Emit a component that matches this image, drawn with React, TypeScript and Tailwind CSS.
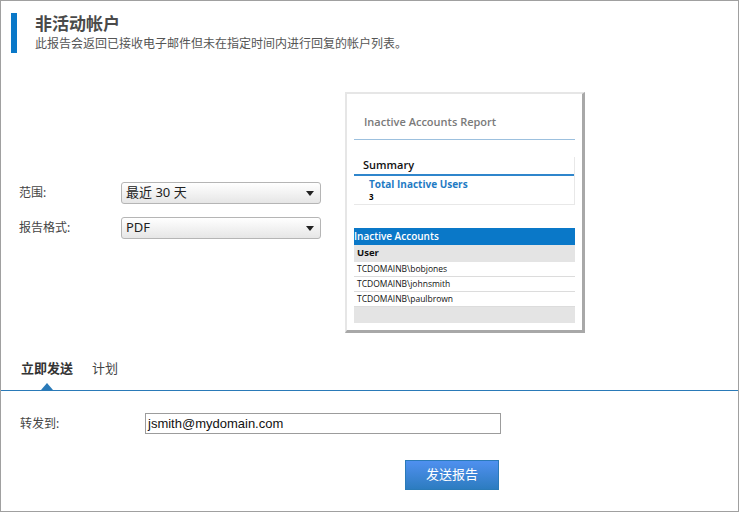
import * as React from "react"

const cjk = { fontFamily: '"Noto Sans", "Noto Sans CJK SC", sans-serif' }
const report = { fontFamily: '"Open Sans", "Noto Sans", sans-serif' }
const latin = { fontFamily: '"Liberation Sans", "Noto Sans CJK SC", sans-serif' }

function Select({ value }: { value: string }) {
  return (
    <div className="flex h-[22px] w-[200px] items-center justify-between rounded-[3px] border border-[#b5b5b5] bg-gradient-to-b from-white to-[#e6e6e6] pl-[4px] pr-[6px] text-[13px] text-[#222]">
      <span>{value}</span>
      <svg width="8" height="5" viewBox="0 0 8 5">
        <path d="M0 0h8L4 5z" fill="#222" />
      </svg>
    </div>
  )
}

function ReportPreview() {
  const users = ["TCDOMAINB\\bobjones", "TCDOMAINB\\johnsmith", "TCDOMAINB\\paulbrown"]
  return (
    <div className="h-[241px] w-[240px] border-l-2 border-t-2 border-[#e6e6e6] border-r-[3px] border-b-[3px] border-r-[#a8a8a8] border-b-[#a8a8a8] bg-white" style={report}>
      <div className="px-[7px] pt-[20px]">
        <div className="pb-[8px] pl-[10px] text-[11px] font-semibold text-[#7a7a7a]">Inactive Accounts Report</div>
        <div className="h-px bg-[#9cc0de]" />
        <div className="mt-[17px] border-b border-r border-[#e8e8e8]">
          <div className="pb-[1px] pl-[9px] text-[11px] font-semibold text-[#111]">Summary</div>
          <div className="h-[2px] bg-[#2f86cc]" />
          <div className="pl-[15px] pt-[1px] text-[10px] font-bold leading-[14px] text-[#1f7bc4]">Total Inactive Users</div>
          <div className="pb-[2px] pl-[15px] text-[8px] font-bold leading-[11px] text-black">3</div>
        </div>
        <div className="mt-[23px]">
          <div className="flex h-[17px] items-center bg-[#0a78c8] text-[10px] font-semibold text-white">Inactive Accounts</div>
          <div className="flex h-[17px] items-center bg-[#e4e4e4] pl-[3px] text-[9.5px] font-bold text-[#111]">User</div>
          {users.map(u => (
            <div key={u} className="flex h-[15px] items-center border-b border-[#dcdcdc] bg-white pl-[3px] text-[8.5px] text-[#111]">
              {u}
            </div>
          ))}
          <div className="h-[16px] bg-[#e4e4e4]" />
        </div>
      </div>
    </div>
  )
}

export default function App() {
  return (
    <div className="relative h-[512px] w-[739px] overflow-hidden border border-[#a0a0a0] bg-white" style={cjk}>
      <div className="ml-[10px] mt-[12px] flex">
        <div className="h-[40px] w-[6px] bg-[#0a78c8]" />
        <div className="ml-[18px]">
          <div className="text-[17px] font-bold leading-[22px] text-[#4a4a4a]">非活动帐户</div>
          <div className="text-[12px] leading-[17px] text-[#555]">此报告会返回已接收电子邮件但未在指定时间内进行回复的帐户列表。</div>
        </div>
      </div>

      <div className="mt-[39px] flex">
        <div className="ml-[18px] mt-[90px] flex flex-col gap-[13px]">
          <div className="flex items-center">
            <span className="w-[102px] text-[12px] text-[#444]">范围:</span>
            <Select value="最近 30 天" />
          </div>
          <div className="flex items-center">
            <span className="w-[102px] text-[12px] text-[#444]">报告格式:</span>
            <Select value="PDF" />
          </div>
        </div>
        <div className="ml-[24px]">
          <ReportPreview />
        </div>
      </div>

      <div className="relative mt-[22px] flex h-[36px] gap-[19px] border-b border-[#2a7ab8] pl-[20px] text-[13px]">
        <span className="pt-[4px] font-bold text-[#333]">立即发送</span>
        <span className="pt-[4px] text-[#444]">计划</span>
        <div className="absolute bottom-0 left-[40px] h-0 w-0 border-x-[6px] border-b-[7px] border-x-transparent border-b-[#2a7ab8]" />
      </div>

      <div className="mt-[22px] flex items-center">
        <span className="ml-[19px] w-[125px] text-[12px] text-[#444]">转发到:</span>
        <div className="flex h-[21px] w-[356px] items-center border border-[#9c9c9c] px-[2px] text-[13px] text-[#111]" style={latin}>jsmith@mydomain.com</div>
      </div>

      <div className="mt-[26px] flex">
        <button className="ml-[404px] h-[30px] w-[94px] border border-[#2a7ab8] bg-gradient-to-b from-[#4f90f0] to-[#2c7cc0] text-[13px] text-white">
          发送报告
        </button>
      </div>
    </div>
  )
}
